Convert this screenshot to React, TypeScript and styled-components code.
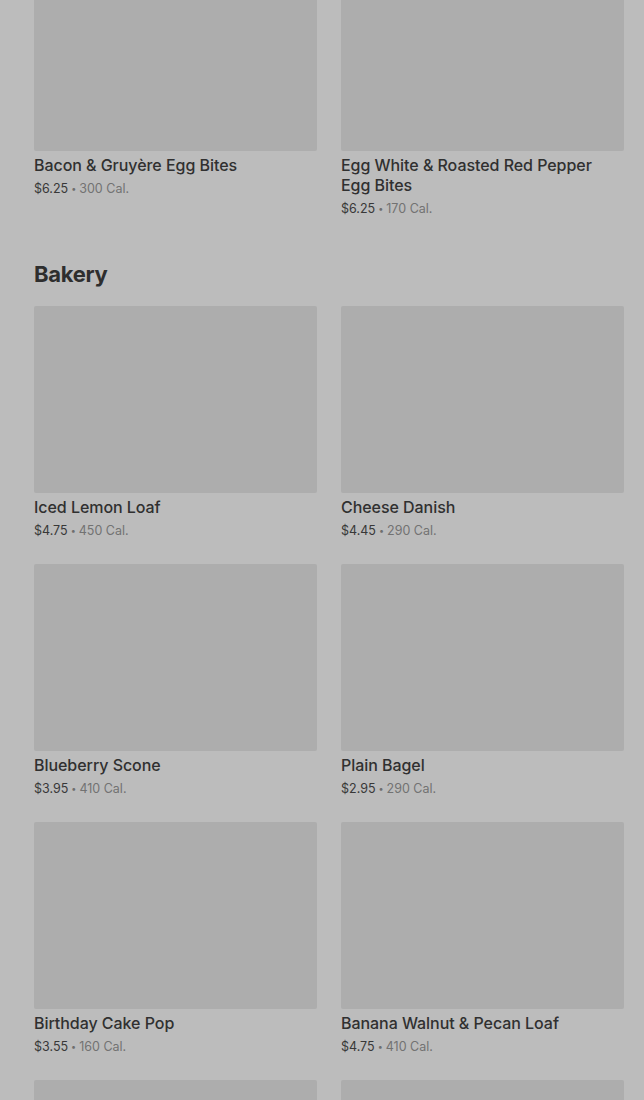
import React from "react"
import styled, { createGlobalStyle } from "styled-components"

interface Item {
  name: string
  price: string
  cal: number
}

const breakfast: Item[] = [
  { name: "Bacon & Gruyère Egg Bites", price: "$6.25", cal: 300 },
  { name: "Egg White & Roasted Red Pepper Egg Bites", price: "$6.25", cal: 170 },
]

const bakery: Item[] = [
  { name: "Iced Lemon Loaf", price: "$4.75", cal: 450 },
  { name: "Cheese Danish", price: "$4.45", cal: 290 },
  { name: "Blueberry Scone", price: "$3.95", cal: 410 },
  { name: "Plain Bagel", price: "$2.95", cal: 290 },
  { name: "Birthday Cake Pop", price: "$3.55", cal: 160 },
  { name: "Banana Walnut & Pecan Loaf", price: "$4.75", cal: 410 },
]

function Card({ item }: { item: Item }) {
  return (
    <CardBox>
      <Thumb />
      <Name>{item.name}</Name>
      <Meta>
        <Price>{item.price}</Price>
        <Dot>•</Dot>
        <Cal>{item.cal} Cal.</Cal>
      </Meta>
    </CardBox>
  )
}

export default function App() {
  return (
    <>
      <GlobalStyle />
      <Page>
        <Grid $offset={-36}>
          {breakfast.map(item => (
            <Card key={item.name} item={item} />
          ))}
        </Grid>
        <Heading>Bakery</Heading>
        <Grid>
          {bakery.map(item => (
            <Card key={item.name} item={item} />
          ))}
          <Thumb />
          <Thumb />
        </Grid>
      </Page>
    </>
  )
}

const GlobalStyle = createGlobalStyle`
  html, body {
    margin: 0;
    background: #bcbcbc;
    overflow: hidden;
  }
  body {
    font-family: Inter, "Noto Sans", sans-serif;
    -webkit-font-smoothing: antialiased;
  }
`

const Page = styled.div`
  padding: 0 20px 0 34px;
  height: 1100px;
  overflow: hidden;
`

const Grid = styled.div<{ $offset?: number }>`
  display: grid;
  grid-template-columns: 283px 283px;
  column-gap: 24px;
  row-gap: 24px;
  margin-top: ${p => p.$offset ?? 0}px;
`

const CardBox = styled.div`
  display: flex;
  flex-direction: column;
`

const Thumb = styled.div`
  height: 187px;
  background: #adadad;
  border-radius: 2px;
`

const Name = styled.div`
  margin-top: 4px;
  font-size: 16px;
  line-height: 20px;
  font-weight: 500;
  color: #303030;
  letter-spacing: -0.05px;
`

const Meta = styled.div`
  display: flex;
  align-items: center;
  gap: 3px;
  margin-top: 5px;
  font-size: 12.5px;
  line-height: 18px;
`

const Price = styled.span`
  color: #383838;
`

const Dot = styled.span`
  color: #6e6e6e;
  font-size: 9px;
`

const Cal = styled.span`
  color: #727272;
`

const Heading = styled.h2`
  margin: 42px 0 18px;
  font-size: 22px;
  line-height: 28px;
  font-weight: 700;
  color: #2e2e2e;
  letter-spacing: -0.3px;
`
